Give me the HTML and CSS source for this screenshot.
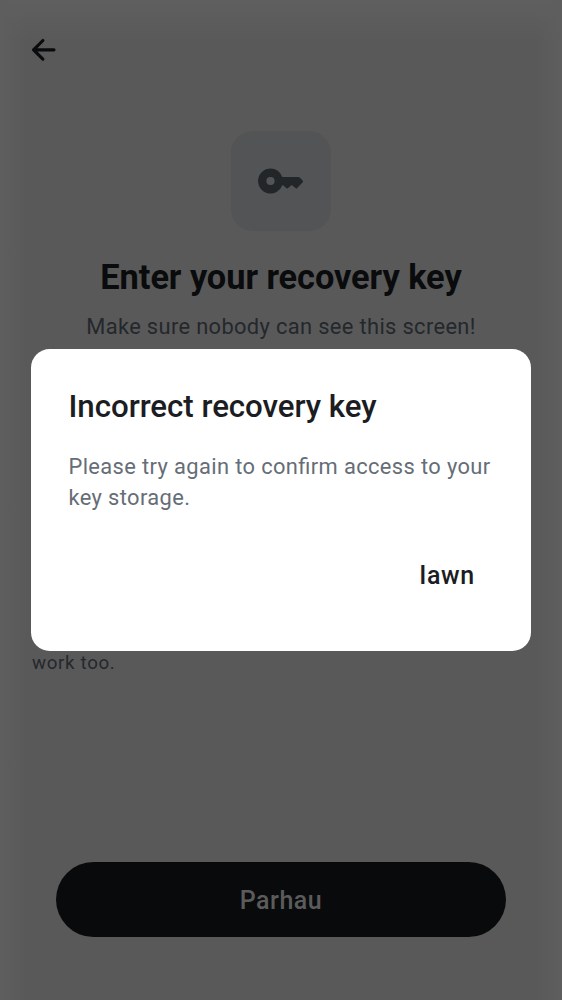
FILE: index.html
```html
<!DOCTYPE html>
<html lang="cy">
<head>
<meta charset="utf-8">
<title>Enter your recovery key</title>
<link rel="stylesheet" href="styles.css">
</head>
<body>
<main class="screen">
  <header class="topbar">
    <svg class="back" viewBox="0 0 24 24" aria-label="Back"><path d="M11.300 6 5.400 11.900l5.900 5.900M5.600 11.900H18.300" /></svg>
  </header>
  <section class="intro">
    <div class="badge">
      <svg class="key" viewBox="0 0 46 26"><path fill-rule="evenodd" d="M12.500 0.500a12.500 12.500 0 1 0 11.800 16.700h.8l4 3.600 4.600-3.800 4.800 3.800 6.200-6.500c.5-.6.4-1.200 0-1.800l-3-3c-.4-.4-.8-.6-1.400-.6H24.300A12.500 12.500 0 0 0 12.500.500zM12.500 8.900a4.100 4.100 0 1 1 0 8.200 4.100 4.100 0 0 1 0-8.200z"/></svg>
    </div>
    <h1 class="title">Enter your recovery key</h1>
    <p class="subtitle">Make sure nobody can see this screen!</p>
  </section>
  <p class="hint">work too.</p>
  <footer class="actions"><button class="continue">Parhau</button></footer>
</main>
<div class="overlay">
  <div class="dialog" role="alertdialog">
    <h2 class="dialog-title">Incorrect recovery key</h2>
    <p class="dialog-text">Please try again to confirm access to your key storage.</p>
    <div class="dialog-actions"><button class="confirm">Iawn</button></div>
  </div>
</div>
</body>
</html>
```
FILE: styles.css
```css
* { box-sizing: border-box; }
body { margin: 0; font-family: Roboto, sans-serif; }
h1, h2, p { margin: 0; font-weight: 400; }
button { border: 0; padding: 0; background: none; font: inherit; }

.screen {
  width: 562px;
  height: 1000px;
  overflow: hidden;
  display: flex;
  flex-direction: column;
  background:
    linear-gradient(to right, #5e5e5e, rgba(94, 94, 94, 0) 28px),
    linear-gradient(to left, #5e5e5e, rgba(94, 94, 94, 0) 28px),
    linear-gradient(to bottom, #5f5f5f, rgba(95, 95, 95, 0) 42px),
    #595959;
}
.topbar { height: 100px; flex: none; padding: 31px 0 0 25px; }
.back {
  display: block;
  width: 38px;
  height: 38px;
  fill: none;
  stroke: #0a0b0d;
  stroke-width: 2;
  stroke-linecap: round;
  stroke-linejoin: round;
}
.intro { height: 549px; flex: none; padding-top: 31px; display: flex; flex-direction: column; align-items: center; }
.badge {
  width: 100px;
  height: 100px;
  border-radius: 22px;
  background: #535456;
  display: flex;
  align-items: center;
  justify-content: center;
}
.key { width: 46px; height: 26px; fill: #222629; }
.title {
  margin-top: 25px;
  font-size: 34.375px;
  line-height: 42px;
  font-weight: 700;
  letter-spacing: -.06px;
  color: #0a0b0d;
  white-space: nowrap;
}
.subtitle {
  margin-top: 13px;
  font-size: 21.875px;
  line-height: 32px;
  letter-spacing: .35px;
  color: #24282c;
  white-space: nowrap;
}
.hint {
  padding-left: 32px;
  font-size: 18.75px;
  line-height: 28px;
  letter-spacing: .65px;
  color: #24282c;
}
.actions { margin-top: auto; padding: 0 56px 62.7px; display: flex; }
.continue {
  flex: 1;
  height: 75px;
  border-radius: 38px;
  background: #090a0c;
  color: #5b5b5b;
  font-size: 25px;
  font-weight: 500;
  letter-spacing: .5px;
  padding-top: 1px;
}

.overlay { position: absolute; inset: 0 auto auto 0; width: 562px; height: 1000px; display: grid; place-items: center; }
.dialog {
  width: 500px;
  height: 301.5px;
  padding: 38px 37.5px;
  border-radius: 18.75px;
  background: #fff;
  display: flex;
  flex-direction: column;
}
.dialog-title { font-size: 31.25px; line-height: 40px; font-weight: 500; letter-spacing: -.04px; color: #1b1d22; white-space: nowrap; }
.dialog-text {
  margin-top: 24px;
  font-size: 21.875px;
  line-height: 31px;
  letter-spacing: .38px;
  font-feature-settings: "liga" 1;
  color: #656d77;
}
.dialog-actions { margin-top: 45.5px; display: flex; justify-content: flex-end; padding-right: 18.75px; }
.confirm { font-size: 25px; line-height: 34px; font-weight: 500; letter-spacing: .6px; color: #1b1d22; }
```
